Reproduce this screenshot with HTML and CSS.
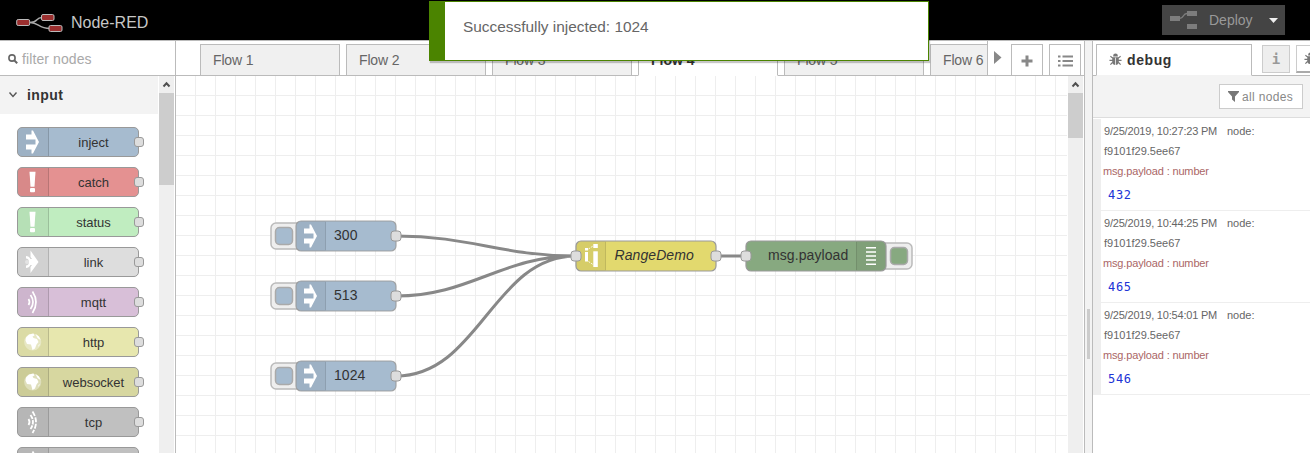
FILE: index.html
```
<!DOCTYPE html>
<html lang="en">
<head>
<meta charset="utf-8">
<title>Node-RED</title>
<link rel="stylesheet" href="styles.css">
</head>
<body>
<svg class="defs" width="0" height="0">
  <defs>
    <symbol id="inject-arrow" viewBox="0 0 30 30"><path fill="#fff" d="M8 7.500h5.500v-4H15L21 15l-6 11.500h-1.500v-4H8v-5h9.500v-5H8z"/></symbol>
    <symbol id="alert" viewBox="0 0 30 30"><path fill="#fff" d="M11.500 4.700h6l-1 15h-4z"/><rect x="12" y="21" width="5" height="4.300" rx="1" fill="#fff"/></symbol>
    <symbol id="link" viewBox="0 0 30 30"><path fill="#fff" d="M12.500 3.500L20.500 15l-8 11v-6l1.500-2h-1.500c-1 2-2.500 3-4.500 3v-2.500c4 0 4-7 0-7V9c2 0 3.500 1 4.500 3H14l-1.500-2z"/><circle cx="9" cy="15" r="2" fill="#fff" fill-opacity=".4"/></symbol>
    <symbol id="waves" viewBox="0 0 30 30"><g fill="none" stroke="#fff" stroke-width="1.700"><path d="M10.500 12q2 3 0 6"/><path d="M12.500 8q5 7 0 14"/><path d="M14.500 4.500q7 10.500 0 21.500"/></g></symbol>
    <symbol id="dashes" viewBox="0 0 30 30"><g fill="none" stroke="#fff" stroke-width="1.800"><path d="M10.500 12q2 3 0 6"/><path d="M12.500 8q5 7 0 14" stroke-dasharray="4.500 1"/><path d="M14.500 4.500q7 10.500 0 21.500" stroke-dasharray="5 1.500"/></g></symbol>
    <symbol id="globe" viewBox="0 0 30 30"><circle cx="14.700" cy="15" r="8.600" fill="#fff" fill-opacity=".35"/><path fill="#fff" d="M8 10.500l3-3 4.500-1 1 2-2 1 1 1.500 3.500 1 1.500 3-2 2.500-1.500 4-2.500 1.500-1.500-5.500-4-.500-1.500-3.500zM17.500 7l3.500 2.500 1.500 3.500-3-2zM20.500 18l1.500-1-1.500 3z"/></symbol>
    <symbol id="bug" viewBox="0 0 14 14"><path d="M4.500 3a2.500 2.500 0 0 1 5 0v.7h-5zM3.500 4.500h7v5.200A3.500 3.500 0 0 1 7 13a3.500 3.500 0 0 1-3.500-3.300z"/><path d="M1.500 3.500l2.500 2M12.500 3.500l-2.500 2M.5 8h13M1.500 12.500l2.500-2.500M12.500 12.500l-2.500-2.500" fill="none" stroke="currentColor" stroke-width="1.300"/><path d="M7 5v8" stroke="#fff" stroke-width=".8"/></symbol>
    <symbol id="up" viewBox="0 0 15 17"><path d="M4.500 10.500l3-3.200 3 3.200" fill="none" stroke="#505050" stroke-width="2"/></symbol>
    <pattern id="grid" x="176" y="76" width="20" height="20" patternUnits="userSpaceOnUse"><path d="M19.500 0v20M0 19.500h20" stroke="#eee"/></pattern>
    <g id="port"><rect x="-5" y="-5" width="10" height="10" rx="3" fill="#ddd" stroke="#999"/></g>
    <g id="inject-node">
      <rect x="-25" y="2" width="32" height="26" rx="5" fill="#eee" stroke="#bbb" stroke-width="1.500"/>
      <rect x="-20.500" y="6.500" width="17" height="17" rx="4" fill="#a6bbcf" stroke="#aaa" stroke-width="1.500"/>
      <rect width="100" height="30" rx="5" fill="#a6bbcf"/>
      <path d="M5 0h25v30H5a5 5 0 0 1-5-5V5a5 5 0 0 1 5-5z" fill="#000" fill-opacity=".05"/>
      <path d="M29.500 1v28" stroke="#000" stroke-opacity=".1"/>
      <rect width="100" height="30" rx="5" fill="none" stroke="#999" stroke-opacity=".85" stroke-width="1.200"/>
      <use href="#inject-arrow" width="30" height="30"/>
      <use href="#port" x="100" y="15"/>
    </g>
  </defs>
</svg>
<div class="app">
  <header class="header">
    <div class="brand">
      <svg width="48" height="20" viewBox="0 0 48 20"><path d="M14 9.500c9 0 5-5 12-5M14 9.500c9 0 8 6 20 6" fill="none" stroke="#aaa" stroke-width="1.400"/><g fill="#9b2f2f" stroke="#bbb"><rect x=".7" y="6.500" width="13" height="6" rx="1.500"/><rect x="25.500" y="1.500" width="12.500" height="6" rx="1.500"/><rect x="33" y="12.500" width="13" height="6" rx="1.500"/></g></svg>
      <span>Node-RED</span>
    </div>
    <div class="deploy">
      <svg width="28" height="19" viewBox="0 0 28 19"><g fill="#7d7d7d"><rect y="5" width="10" height="5"/><rect x="17" width="10" height="5"/><rect x="17" y="13" width="10" height="5"/></g><path d="M9 7.500c6 0 3-5 8-5" fill="none" stroke="#7d7d7d" stroke-width="1.300"/></svg>
      <span>Deploy</span>
      <svg class="caret" width="9" height="5" viewBox="0 0 9 5"><path d="M0 0h9L4.500 5z" fill="#eee"/></svg>
    </div>
  </header>
  <main class="main">
    <aside class="palette">
      <div class="search">
        <svg width="10" height="10" viewBox="0 0 10 10"><circle cx="4" cy="4" r="3.100" fill="none" stroke="#666" stroke-width="1.600"/><path d="M6.200 6.200l3 3" stroke="#666" stroke-width="2"/></svg>
        <span>filter nodes</span>
      </div>
      <div class="palette-body">
        <div class="palette-list">
          <div class="category"><svg width="10" height="8" viewBox="0 0 10 8"><path d="M1.500 1.500L5 5.500l3.500-4" fill="none" stroke="#555" stroke-width="1.400"/></svg><span>input</span></div>
          <div class="nodes">
            <div class="node blue"><svg class="icon"><use href="#inject-arrow" width="30" height="30" y="-1"/></svg><span>inject</span><i></i></div>
            <div class="node red"><svg class="icon"><use href="#alert" width="30" height="30" y="-1"/></svg><span>catch</span><i></i></div>
            <div class="node green"><svg class="icon"><use href="#alert" width="30" height="30" y="-1"/></svg><span>status</span><i></i></div>
            <div class="node light"><svg class="icon"><use href="#link" width="30" height="30" y="-1"/></svg><span>link</span><i></i></div>
            <div class="node purple"><svg class="icon"><use href="#waves" width="30" height="30" y="-1"/></svg><span>mqtt</span><i></i></div>
            <div class="node yellow"><svg class="icon"><use href="#globe" width="30" height="30" y="-1"/></svg><span>http</span><i></i></div>
            <div class="node olive"><svg class="icon"><use href="#globe" width="30" height="30" y="-1"/></svg><span>websocket</span><i></i></div>
            <div class="node gray"><svg class="icon"><use href="#dashes" width="30" height="30" y="-1"/></svg><span>tcp</span><i></i></div>
            <div class="node gray"><svg class="icon"><use href="#dashes" width="30" height="30" y="-1"/></svg><span></span><i></i></div>
          </div>
        </div>
        <div class="scrollbar"><svg width="15" height="17"><use href="#up"/></svg><div class="thumb tall"></div></div>
      </div>
    </aside>
    <section class="workspace">
      <div class="tabbar">
        <div class="tabs">
          <div class="tab">Flow 1</div><div class="tab">Flow 2</div><div class="tab">Flow 3</div><div class="tab active">Flow 4</div><div class="tab">Flow 5</div><div class="tab">Flow 6</div>
        </div>
        <div class="tab-tools">
          <svg class="next" width="8" height="13" viewBox="0 0 8 13"><path d="M0 0l7.500 6.500L0 13z" fill="#888"/></svg>
          <div class="tool"><svg width="12" height="12"><path d="M6 .5v11M.5 6h11" stroke="#888" stroke-width="3"/></svg></div>
          <div class="tool"><svg width="15" height="12"><path d="M4.500 1.500H15M4.500 6H15M4.500 10.500H15M0 1.500h2.500M0 6h2.500M0 10.500h2.500" stroke="#888" stroke-width="2"/></svg></div>
        </div>
      </div>
      <div class="canvas-row">
        <svg class="canvas" width="891" height="377" viewBox="176 76 891 377">
          <rect x="176" y="76" width="891" height="377" fill="url(#grid)"/>
          <g fill="none" stroke="#888" stroke-width="3">
            <path d="M396 236C471 236 501 256 576 256M396 296C471 296 501 256 576 256M396 376C479 376 493 256 576 256M716 256h30"/>
          </g>
          <use href="#inject-node" x="296" y="221"/><use href="#inject-node" x="296" y="281"/><use href="#inject-node" x="296" y="361"/>
          <g class="label"><text x="334" y="240">300</text><text x="334" y="300">513</text><text x="334" y="380">1024</text></g>
          <rect x="576" y="241" width="140" height="30" rx="5" fill="#e2d96e"/>
          <path d="M581 241h25v30h-25a5 5 0 0 1-5-5v-20a5 5 0 0 1 5-5z" fill-opacity=".05"/>
          <path d="M605.500 242v28" stroke="#000" stroke-opacity=".1"/>
          <rect x="576" y="241" width="140" height="30" rx="5" fill="none" stroke="#999" stroke-width="1.200"/>
          <g fill="#fff"><rect x="585" y="248" width="3" height="2.500"/><rect x="585" y="252" width="3" height="9.500"/><rect x="593.300" y="244" width="4.500" height="4"/><rect x="593.300" y="251.300" width="4.500" height="15.700"/></g>
          <path d="M588.500 249l4.500-3M588.500 261.500l4.500 3" stroke="#fff" stroke-width=".8" stroke-dasharray="2 1"/>
          <text class="label italic" x="614.500" y="260">RangeDemo</text>
          <use href="#port" x="576" y="256"/><use href="#port" x="716" y="256"/>
          <rect x="879" y="243" width="33" height="26" rx="5" fill="#eee" stroke="#bbb" stroke-width="1.500"/>
          <rect x="890.500" y="247.500" width="17" height="17" rx="4" fill="#87a980" stroke="#aaa" stroke-width="1.500"/>
          <rect x="746" y="241" width="140" height="30" rx="5" fill="#87a980"/>
          <path d="M856 241h25a5 5 0 0 1 5 5v20a5 5 0 0 1-5 5h-25z" fill-opacity=".05"/>
          <path d="M856.500 242v28" stroke="#000" stroke-opacity=".1"/>
          <rect x="746" y="241" width="140" height="30" rx="5" fill="none" stroke="#999" stroke-width="1.200"/>
          <path d="M866 247.800h10M866 251.900h10M866 256h10M866 260.100h10M866 264.200h10" stroke="#fff" stroke-width="1.500"/>
          <text class="label" x="768" y="260">msg.payload</text>
          <use href="#port" x="746" y="256"/>
        </svg>
        <div class="scrollbar"><svg width="15" height="17"><use href="#up"/></svg><div class="thumb short"></div></div>
      </div>
    </section>
    <div class="separator"><div class="handle"></div></div>
    <aside class="sidebar">
      <div class="side-tabs">
        <div class="side-tab"><svg width="13" height="13"><use href="#bug"/></svg><span>debug</span></div>
        <div class="side-button info">i</div>
        <div class="side-button bugs"><svg width="13" height="13"><use href="#bug"/></svg></div>
      </div>
      <div class="side-toolbar"><div class="filter"><svg width="11" height="11"><path d="M0 0h11v1L7 5.500V11L4 8.500v-3L0 1z" fill="#777"/></svg><span>all nodes</span></div></div>
      <div class="messages">
        <div class="message"><div class="meta"><span class="date">9/25/2019, 10:27:23 PM</span><span>node:</span></div><div class="meta">f9101f29.5ee67</div><div class="topic">msg.payload : number</div><div class="value">432</div></div>
        <div class="message"><div class="meta"><span class="date">9/25/2019, 10:44:25 PM</span><span>node:</span></div><div class="meta">f9101f29.5ee67</div><div class="topic">msg.payload : number</div><div class="value">465</div></div>
        <div class="message"><div class="meta"><span class="date">9/25/2019, 10:54:01 PM</span><span>node:</span></div><div class="meta">f9101f29.5ee67</div><div class="topic">msg.payload : number</div><div class="value">546</div></div>
      </div>
    </aside>
  </main>
  <div class="notification">Successfully injected: 1024</div>
</div>
</body>
</html>
```
FILE: styles.css
```
* { box-sizing: border-box; }
body { margin: 0; font: 14px/20px "Liberation Sans", Arial, sans-serif; background: #fff; color: #333; }
svg { display: block; flex: none; }
.defs { position: absolute; }
.app { position: relative; width: 1310px; height: 453px; overflow: hidden; display: flex; flex-direction: column; }
.header { height: 40px; flex: none; background: #000; display: flex; justify-content: space-between; align-items: center; padding: 0 25px 0 16px; }
.brand { display: flex; align-items: center; gap: 7px; color: #c7c7c7; font-size: 16px; padding-top: 5px; }
.deploy { display: flex; align-items: center; width: 123px; height: 30px; background: #444; color: #999; padding-left: 8px; gap: 11px; }
.caret { margin-left: 5px; }
.main { flex: 1; min-height: 0; display: flex; border-top: 1px solid #bbb; }
.palette { width: 176px; flex: none; border-right: 1px solid #bbb; display: flex; flex-direction: column; }
.search { height: 35px; flex: none; border-bottom: 1px solid #bbb; display: flex; align-items: center; gap: 4px; padding: 1px 0 0 8px; color: #a9a9a9; letter-spacing: .1px; }
.palette-body { flex: 1; min-height: 0; display: flex; }
.palette-list { width: 158px; margin-right: 1px; overflow: hidden; }
.category { height: 38px; background: #f3f3f3; display: flex; align-items: center; gap: 9px; padding-left: 8px; font-weight: bold; letter-spacing: .4px; }
.nodes { display: flex; flex-direction: column; gap: 10px; padding: 13px 0 0 17px; }
.node { position: relative; flex: none; width: 122px; height: 30px; border: 1px solid #999; border-radius: 5px; display: flex; align-items: center; font-size: 13px; }
.node .icon { width: 31px; height: 28px; background: rgba(0,0,0,.05); border-right: 1px solid rgba(0,0,0,.15); border-radius: 4px 0 0 4px; }
.node span { flex: 1; text-align: center; padding-top: 1px; }
.node i { position: absolute; right: -6px; top: 9px; width: 10px; height: 10px; background: #ddd; border: 1px solid #999; border-radius: 3px; }
.blue { background: #a6bbcf; }
.red { background: #e49191; }
.green { background: #c0edc0; }
.light { background: #ddd; }
.purple { background: #d8bfd8; }
.yellow { background: #e7e7ae; }
.olive { background: #d7d7a0; }
.gray { background: #c0c0c0; }
.scrollbar { width: 15px; flex: none; background: #efefef; }
.thumb { background: #cdcdcd; }
.tall { height: 92px; }
.short { height: 45px; }
.workspace { width: 909px; flex: none; border-right: 1px solid #bbb; display: flex; flex-direction: column; }
.tabbar { height: 35px; flex: none; display: flex; background: linear-gradient(#bbb, #bbb) bottom / 100% 1px no-repeat; }
.tabs { width: 811px; flex: none; display: flex; gap: 6px; padding: 3px 0 0 24px; overflow: hidden; }
.tab { width: 140px; height: 32px; flex: none; border: 1px solid #bbb; background: #f0f0f0; color: #666; padding: 5px 12px; letter-spacing: -.15px; }
.tab.active { background: #fff; color: #333; font-weight: bold; border-bottom-color: #fff; letter-spacing: 0; }
.tab-tools { display: flex; align-items: flex-start; border-left: 1px solid #bbb; padding: 3px 0 0 6px; height: 34px; }
.next { margin: 7px 9px 0 0; }
.tool { width: 32px; height: 31px; border: 1px solid #bbb; border-bottom: 0; display: flex; align-items: center; justify-content: center; margin-right: 6px; padding-top: 2px; }
.canvas-row { display: flex; flex: 1; min-height: 0; }
.canvas { margin-right: 1px; }
.label { font-size: 14px; fill: #333; letter-spacing: .08px; }
.italic { font-style: italic; }
.separator { width: 7px; flex: none; background: #f3f3f3; display: flex; align-items: flex-start; padding: 268px 0 0 2px; }
.handle { width: 3px; height: 50px; background: #ccc; }
.sidebar { flex: 1; min-width: 0; border-left: 1px solid #bbb; display: flex; flex-direction: column; }
.side-tabs { height: 35px; flex: none; display: flex; align-items: flex-start; padding: 3px 0 0 3px; overflow: hidden; background: linear-gradient(#bbb, #bbb) bottom / 100% 1px no-repeat; }
.side-tab { width: 156px; height: 32px; flex: none; border: 1px solid #bbb; border-bottom-color: #f3f3f3; background: #fff; display: flex; align-items: center; gap: 5px; padding: 0 0 1px 12px; font-weight: bold; letter-spacing: .6px; color: #333; }
.side-tab svg, .bugs svg { color: #777; fill: #777; }
.side-button { width: 28px; height: 28px; flex: none; border: 1px solid #ccc; display: flex; align-items: center; justify-content: center; margin-top: 1px; }
.info { margin-left: 10px; background: #eee; color: #999; font: bold 14px "DejaVu Sans Mono", monospace; }
.bugs { margin-left: 6px; border-bottom: 2px solid #aaa; }
.side-toolbar { height: 42px; flex: none; background: #f3f3f3; border-bottom: 1px solid #ddd; display: flex; justify-content: flex-end; padding: 8px 7px 0 0; }
.filter { width: 84px; height: 25px; background: #fff; border: 1px solid #ccc; display: flex; align-items: center; gap: 3px; padding-left: 8px; color: #888; font-size: 12px; letter-spacing: .35px; white-space: nowrap; }
.messages { padding-top: 1px; }
.message { height: 92px; border-left: 8px solid #eee; border-bottom: 1px solid #eee; padding: 2px 0 0 3px; font-size: 11px; line-height: 20px; }
.meta { display: flex; color: #666; height: 20px; }
.date { width: 123px; letter-spacing: -.2px; white-space: nowrap; }
.topic { color: #a66; letter-spacing: -.15px; height: 20px; margin-left: -1px; }
.value { color: #2033d6; font: 12px/20px "DejaVu Sans Mono", monospace; letter-spacing: .7px; padding: 4px 0 0 4px; }
.notification { position: absolute; left: 429px; top: 1px; width: 500px; height: 60px; border: 1px solid #4b8400; border-left-width: 16px; background: #fff; padding: 15px 18px; color: #666; font-size: 15.400px; box-shadow: 1px 2px 1px 0 rgba(0,0,0,.22); }
```
